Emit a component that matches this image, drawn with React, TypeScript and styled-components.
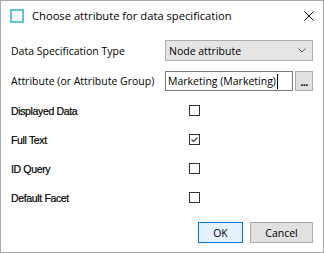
import React from "react";
import styled, { createGlobalStyle } from "styled-components";

const GlobalStyle = createGlobalStyle`
  html, body {
    margin: 0;
    padding: 0;
    background: #fff;
  }
`;

const uiFont = `"Open Sans", "Liberation Sans", sans-serif`;

const Window = styled.div`
  width: 324px;
  height: 253px;
  box-sizing: border-box;
  border: 1px solid #a9a9a9;
  background: #fff;
  display: flex;
  flex-direction: column;
  font-family: ${uiFont};
  color: #000;
`;

const TitleBar = styled.div`
  height: 29px;
  display: flex;
  align-items: center;
  padding: 0 9px;
`;

const TitleText = styled.span`
  margin-left: 8px;
  font-size: 11.2px;
  color: #000;
`;

const CloseButton = styled.div`
  margin-left: auto;
  display: flex;
`;

const Body = styled.div`
  flex: 1;
  display: flex;
  flex-direction: column;
  padding: 10px 10px 9px;
`;

const FieldRow = styled.div<{ $height: number; $gap?: number }>`
  display: grid;
  grid-template-columns: 154px 1fr;
  align-items: center;
  height: ${(p) => p.$height}px;
  margin-top: ${(p) => p.$gap ?? 0}px;
`;

const FieldLabel = styled.span`
  font-size: 10.5px;
`;

const Combo = styled.div`
  height: 100%;
  box-sizing: border-box;
  border: 1px solid #adadad;
  background: #e5e5e5;
  display: flex;
  align-items: center;
  padding: 0 6px 0 3px;
  font-size: 10.5px;
`;

const ComboText = styled.span`
  flex: 1;
`;

const InputGroup = styled.div`
  height: 100%;
  display: flex;
  gap: 2px;
`;

const TextBox = styled.div`
  flex: 1;
  box-sizing: border-box;
  border: 1px solid #7a7a7a;
  background: #fff;
  display: flex;
  align-items: center;
  padding: 0 2px;
  font-size: 10.5px;
`;

const Caret = styled.span`
  display: inline-block;
  width: 1px;
  height: 15px;
  background: #000;
  margin-left: 1px;
`;

const BrowseButton = styled.div`
  width: 18px;
  box-sizing: border-box;
  border: 1px solid #adadad;
  background: #e1e1e1;
  display: flex;
  align-items: flex-end;
  justify-content: center;
  padding-bottom: 4px;
  font-family: "Liberation Sans", sans-serif;
  font-weight: bold;
  font-size: 11px;
  line-height: 8px;
  letter-spacing: -0.5px;
`;

const OptionList = styled.div`
  margin-top: 5px;
  display: flex;
  flex-direction: column;
`;

const OptionRow = styled.div`
  display: grid;
  grid-template-columns: 178px 11px;
  align-items: center;
  height: 29px;
`;

const OptionLabel = styled.span`
  font-family: "Liberation Sans", sans-serif;
  font-size: 10.5px;
  letter-spacing: -0.35px;
  -webkit-text-stroke: 0.2px #000;
`;

const CheckBox = styled.div`
  width: 11px;
  height: 11px;
  box-sizing: border-box;
  border: 1px solid #333;
  background: #fff;
  display: flex;
  align-items: center;
  justify-content: center;
`;

const ButtonBar = styled.div`
  margin-top: auto;
  display: flex;
  justify-content: flex-end;
  gap: 7px;
`;

const DialogButton = styled.div<{ $width: number; $primary?: boolean }>`
  width: ${(p) => p.$width}px;
  height: 21px;
  box-sizing: border-box;
  border: 1px solid ${(p) => (p.$primary ? "#0078d7" : "#adadad")};
  background: ${(p) => (p.$primary ? "#e5f1fb" : "#e1e1e1")};
  display: flex;
  align-items: center;
  justify-content: center;
  font-size: 10.5px;
`;

const AppIcon = () => (
  <svg width="14" height="14" viewBox="0 0 14 14">
    <rect x="1" y="1" width="12" height="12" fill="none" stroke="#2fb9d1" strokeWidth="1.6" />
  </svg>
);

const CloseIcon = () => (
  <svg width="10" height="10" viewBox="0 0 10 10">
    <path d="M0.5 0.5 L9.5 9.5 M9.5 0.5 L0.5 9.5" stroke="#111" strokeWidth="1" />
  </svg>
);

const Chevron = () => (
  <svg width="8" height="5" viewBox="0 0 8 5">
    <path d="M0.5 0.5 L4 4 L7.5 0.5" fill="none" stroke="#555" strokeWidth="1" />
  </svg>
);

const Check = () => (
  <svg width="9" height="9" viewBox="0 0 9 9">
    <path d="M1.5 4.5 L3.5 6.5 L7.5 2.5" fill="none" stroke="#4a4a4a" strokeWidth="1.3" />
  </svg>
);

const options = [
  { label: "Displayed Data", checked: false },
  { label: "Full Text", checked: true },
  { label: "ID Query", checked: false },
  { label: "Default Facet", checked: false },
];

export default function App() {
  return (
    <>
      <GlobalStyle />
      <Window>
        <TitleBar>
          <AppIcon />
          <TitleText>Choose attribute for data specification</TitleText>
          <CloseButton>
            <CloseIcon />
          </CloseButton>
        </TitleBar>
        <Body>
          <FieldRow $height={21}>
            <FieldLabel>Data Specification Type</FieldLabel>
            <Combo>
              <ComboText>Node attribute</ComboText>
              <Chevron />
            </Combo>
          </FieldRow>
          <FieldRow $height={20} $gap={10}>
            <FieldLabel>Attribute (or Attribute Group)</FieldLabel>
            <InputGroup>
              <TextBox>
                Marketing (Marketing)
                <Caret />
              </TextBox>
              <BrowseButton>...</BrowseButton>
            </InputGroup>
          </FieldRow>
          <OptionList>
            {options.map((o) => (
              <OptionRow key={o.label}>
                <OptionLabel>{o.label}</OptionLabel>
                <CheckBox>{o.checked && <Check />}</CheckBox>
              </OptionRow>
            ))}
          </OptionList>
          <ButtonBar>
            <DialogButton $width={45} $primary>
              OK
            </DialogButton>
            <DialogButton $width={63}>Cancel</DialogButton>
          </ButtonBar>
        </Body>
      </Window>
    </>
  );
}
